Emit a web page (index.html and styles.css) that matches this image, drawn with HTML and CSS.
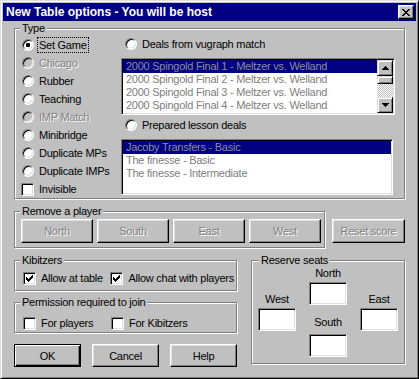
FILE: index.html
```html
<!DOCTYPE html>
<html>
<head>
<meta charset="utf-8">
<link rel="stylesheet" href="styles.css">
</head>
<body>
<div class="window">
  <div class="titlebar">
    <span class="title">New Table options - You will be host</span>
    <span class="close">
      <svg width="8" height="7" viewBox="0 0 8 7" shape-rendering="crispEdges"><path d="M0 0h2v1h-2z M6 0h2v1h-2z M1 1h2v1h-2z M5 1h2v1h-2z M2 2h4v1h-4z M3 3h2v1h-2z M2 4h4v1h-4z M1 5h2v1h-2z M5 5h2v1h-2z M0 6h2v1h-2z M6 6h2v1h-2z" fill="#000"/></svg>
    </span>
  </div>
  <div class="content">
    <div class="group type-group">
      <span class="legend">Type</span>
      <div class="type-left">
        <div class="opt"><span class="radio"><span class="dot"></span></span><span class="lbl focus">Set Game</span></div>
        <div class="opt disabled"><span class="radio"></span><span class="lbl">Chicago</span></div>
        <div class="opt"><span class="radio"></span><span class="lbl">Rubber</span></div>
        <div class="opt"><span class="radio"></span><span class="lbl">Teaching</span></div>
        <div class="opt disabled"><span class="radio"></span><span class="lbl">IMP Match</span></div>
        <div class="opt"><span class="radio"></span><span class="lbl">Minibridge</span></div>
        <div class="opt"><span class="radio"></span><span class="lbl">Duplicate MPs</span></div>
        <div class="opt"><span class="radio"></span><span class="lbl">Duplicate IMPs</span></div>
        <div class="opt opt-inv"><span class="check"></span><span class="lbl">Invisible</span></div>
      </div>
      <div class="type-right">
        <div class="opt opt-r"><span class="radio"></span><span class="lbl">Deals from vugraph match</span></div>
        <div class="listbox list1">
          <div class="items">
            <div class="item sel">2000 Spingold Final 1 - Meltzer vs. Welland</div>
            <div class="item">2000 Spingold Final 2 - Meltzer vs. Welland</div>
            <div class="item">2000 Spingold Final 3 - Meltzer vs. Welland</div>
            <div class="item">2000 Spingold Final 4 - Meltzer vs. Welland</div>
          </div>
          <div class="scrollbar">
            <div class="sb-btn">
              <svg width="7" height="4" viewBox="0 0 7 4" shape-rendering="crispEdges"><path d="M3 0h1v1h-1z M2 1h3v1h-3z M1 2h5v1h-5z M0 3h7v1h-7z" fill="#000"/></svg>
            </div>
            <div class="thumb"></div>
            <div class="track"></div>
            <div class="sb-btn">
              <svg width="7" height="4" viewBox="0 0 7 4" shape-rendering="crispEdges"><path d="M0 0h7v1h-7z M1 1h5v1h-5z M2 2h3v1h-3z M3 3h1v1h-1z" fill="#000"/></svg>
            </div>
          </div>
        </div>
        <div class="opt opt-r opt-r2"><span class="radio"></span><span class="lbl">Prepared lesson deals</span></div>
        <div class="listbox list2">
          <div class="items">
            <div class="item sel">Jacoby Transfers - Basic</div>
            <div class="item">The finesse - Basic</div>
            <div class="item">The finesse - Intermediate</div>
          </div>
        </div>
      </div>
    </div>

    <div class="row-remove">
      <div class="group remove-group">
        <span class="legend">Remove a player</span>
        <div class="btn disabled seat-btn">North</div>
        <div class="btn disabled seat-btn">South</div>
        <div class="btn disabled seat-btn">East</div>
        <div class="btn disabled seat-btn">West</div>
      </div>
      <div class="btn disabled reset">Reset score</div>
    </div>

    <div class="row-bottom">
      <div class="left-col">
        <div class="group kib">
          <span class="legend">Kibitzers</span>
          <div class="opt cb-first"><span class="check checked"><svg width="7" height="7" viewBox="0 0 7 7" shape-rendering="crispEdges"><path d="M6 0h1v1h-1z M5 1h2v1h-2z M0 2h1v1h-1z M4 2h3v1h-3z M0 3h2v1h-2z M3 3h3v1h-3z M0 4h5v1h-5z M1 5h3v1h-3z M2 6h1v1h-1z" fill="#000"/></svg></span><span class="lbl">Allow at table</span></div>
          <div class="opt"><span class="check checked"><svg width="7" height="7" viewBox="0 0 7 7" shape-rendering="crispEdges"><path d="M6 0h1v1h-1z M5 1h2v1h-2z M0 2h1v1h-1z M4 2h3v1h-3z M0 3h2v1h-2z M3 3h3v1h-3z M0 4h5v1h-5z M1 5h3v1h-3z M2 6h1v1h-1z" fill="#000"/></svg></span><span class="lbl">Allow chat with players</span></div>
        </div>
        <div class="group perm">
          <span class="legend">Permission required to join</span>
          <div class="opt cb-first"><span class="check"></span><span class="lbl">For players</span></div>
          <div class="opt"><span class="check"></span><span class="lbl">For Kibitzers</span></div>
        </div>
        <div class="buttons">
          <div class="btn default">OK</div>
          <div class="btn">Cancel</div>
          <div class="btn">Help</div>
        </div>
      </div>
      <div class="group reserve">
        <span class="legend">Reserve seats</span>
        <div class="seat-col side">
          <div class="seat-lbl">West</div>
          <div class="textbox"></div>
        </div>
        <div class="seat-col center">
          <div class="seat-lbl">North</div>
          <div class="textbox"></div>
          <div class="seat-lbl south-lbl">South</div>
          <div class="textbox south-box"></div>
        </div>
        <div class="seat-col side">
          <div class="seat-lbl">East</div>
          <div class="textbox"></div>
        </div>
      </div>
    </div>
  </div>
</div>
</body>
</html>
```

FILE: styles.css
```css
* { box-sizing: border-box; }

body {
  margin: 0;
  background: #c0c0c0;
  font-family: "Liberation Sans", Arial, sans-serif;
  font-size: 11px;
  letter-spacing: -0.25px;
  color: #000;
}

.window {
  width: 419px;
  height: 379px;
  border: 1px solid;
  border-color: #dfdfdf #000 #000 #dfdfdf;
  box-shadow: inset 1px 1px #fff, inset -1px -1px #808080;
  padding: 2px;
  background: #c0c0c0;
  display: flex;
  flex-direction: column;
}

.titlebar {
  height: 18px;
  flex-shrink: 0;
  background: #000080;
  color: #fff;
  display: flex;
  align-items: center;
  padding: 0 2px 0 3px;
  font-weight: bold;
  font-size: 12px;
  letter-spacing: 0;
}

.close {
  margin-left: auto;
  width: 16px;
  height: 14px;
  border: 1px solid;
  border-color: #fff #000 #000 #fff;
  box-shadow: inset -1px -1px #808080, inset 1px 1px #dfdfdf;
  background: #c0c0c0;
  display: flex;
  align-items: center;
  justify-content: center;
}
.close svg { display: block; }

.content {
  padding: 7px 0 0 11px;
}

/* group boxes */
.group {
  position: relative;
  border: 1px solid #808080;
  box-shadow: inset 1px 1px #fff, 1px 1px #fff;
}
.legend {
  position: absolute;
  top: -8px;
  left: 5px;
  padding: 0 2px;
  background: #c0c0c0;
  line-height: 14px;
  white-space: nowrap;
}

/* options */
.opt {
  display: flex;
  align-items: center;
  height: 18px;
  white-space: nowrap;
}
.lbl {
  padding: 0 1px;
  border: 1px solid transparent;
  line-height: 14px;
  margin-left: 3px;
}
.lbl.focus { border: 1px dotted #000; }
.disabled .lbl { color: #808080; text-shadow: 1px 1px 0 #fff; }

.radio {
  width: 12px;
  height: 12px;
  flex-shrink: 0;
  border-radius: 50%;
  border: 1px solid;
  border-color: #808080 #fff #fff #808080;
  box-shadow: inset 1px 1px #000, inset -1px -1px #dfdfdf;
  background: #fff;
  display: flex;
  align-items: center;
  justify-content: center;
}
.disabled .radio { background: #c0c0c0; }
.dot {
  width: 4px;
  height: 4px;
  border-radius: 1px;
  background: #000;
}

.check {
  width: 13px;
  height: 13px;
  flex-shrink: 0;
  border: 1px solid;
  border-color: #808080 #fff #fff #808080;
  box-shadow: inset 1px 1px #000, inset -1px -1px #dfdfdf;
  background: #fff;
  display: flex;
  align-items: center;
  justify-content: center;
}
.check svg { display: block; }

/* type group */
.type-group {
  width: 391px;
  height: 171px;
  display: flex;
  padding: 7px 0 0 7px;
}
.type-left {
  width: 99px;
  display: flex;
  flex-direction: column;
}
.opt-inv .check { margin-left: -1px; }
.type-right {
  display: flex;
  flex-direction: column;
}
.opt-r {
  height: 16px;
  padding-left: 4px;
}
.opt-r2 { margin-top: 2px; }

.listbox {
  border: 1px solid;
  border-color: #808080 #fff #fff #808080;
  box-shadow: inset 1px 1px #000, inset -1px -1px #dfdfdf;
  padding: 1px;
  background: #fff;
  display: flex;
  margin-top: 6px;
}
.list1 { width: 274px; height: 57px; }
.list2 { width: 272px; height: 56px; }
.items { flex: 1; }
.item {
  line-height: 13px;
  height: 13px;
  padding-left: 3px;
  color: #808080;
  white-space: nowrap;
}
.item.sel { background: #000080; color: #8c8c9c; }

.scrollbar {
  width: 16px;
  display: flex;
  flex-direction: column;
}
.sb-btn, .thumb {
  border: 1px solid;
  border-color: #dfdfdf #000 #000 #dfdfdf;
  box-shadow: inset 1px 1px #fff, inset -1px -1px #808080;
  background: #c0c0c0;
}
.sb-btn {
  height: 16px;
  display: flex;
  align-items: center;
  justify-content: center;
}
.sb-btn svg { display: block; }
.thumb { height: 8px; }
.track {
  flex: 1;
  background: repeating-conic-gradient(#c0c0c0 0 25%, #fff 0 50%) 0 0 / 2px 2px;
}

/* buttons */
.btn {
  display: flex;
  align-items: center;
  justify-content: center;
  border: 1px solid;
  border-color: #fff #000 #000 #fff;
  box-shadow: inset -1px -1px #808080, inset 1px 1px #dfdfdf;
  background: #c0c0c0;
  white-space: nowrap;
}
.btn.disabled { color: #808080; text-shadow: 1px 1px 0 #fff; }
.btn.default {
  border: 1px solid #000;
  box-shadow: inset 1px 1px #fff, inset -1px -1px #000, inset -2px -2px #808080;
}

/* remove row */
.row-remove {
  display: flex;
  margin-top: 12px;
}
.remove-group {
  width: 311px;
  height: 37px;
  display: flex;
  gap: 4px;
  padding: 7px 0 0 6px;
}
.seat-btn { width: 72px; height: 24px; }
.reset {
  width: 73px;
  height: 24px;
  margin: 8px 0 0 7px;
}

/* bottom row */
.row-bottom {
  display: flex;
  margin-top: 12px;
}
.left-col {
  width: 223px;
  display: flex;
  flex-direction: column;
}
.kib, .perm {
  height: 31px;
  display: flex;
  align-items: flex-start;
  padding-left: 8px;
}
.kib { padding-top: 8px; }
.perm { padding-top: 11px; margin-top: 11px; }
.cb-first { width: 88px; }

.buttons {
  display: flex;
  gap: 11px;
  margin-top: 11px;
}
.buttons .btn { width: 67px; height: 23px; }

.reserve {
  width: 154px;
  height: 104px;
  margin-left: 14px;
  display: flex;
  gap: 13px;
  padding-left: 6px;
}
.reserve .legend { left: 7px; }
.seat-col {
  width: 38px;
  display: flex;
  flex-direction: column;
}
.seat-col.side { padding-top: 31px; }
.seat-col.center { padding-top: 5px; }
.seat-lbl {
  line-height: 14px;
  text-align: center;
  white-space: nowrap;
}
.textbox {
  margin-top: 2px;
  height: 23px;
  border: 1px solid;
  border-color: #808080 #fff #fff #808080;
  box-shadow: inset 1px 1px #000, inset -1px -1px #dfdfdf;
  background: #fff;
}
.south-lbl { margin-top: 10px; }
.south-box { margin-top: 5px; }
```
